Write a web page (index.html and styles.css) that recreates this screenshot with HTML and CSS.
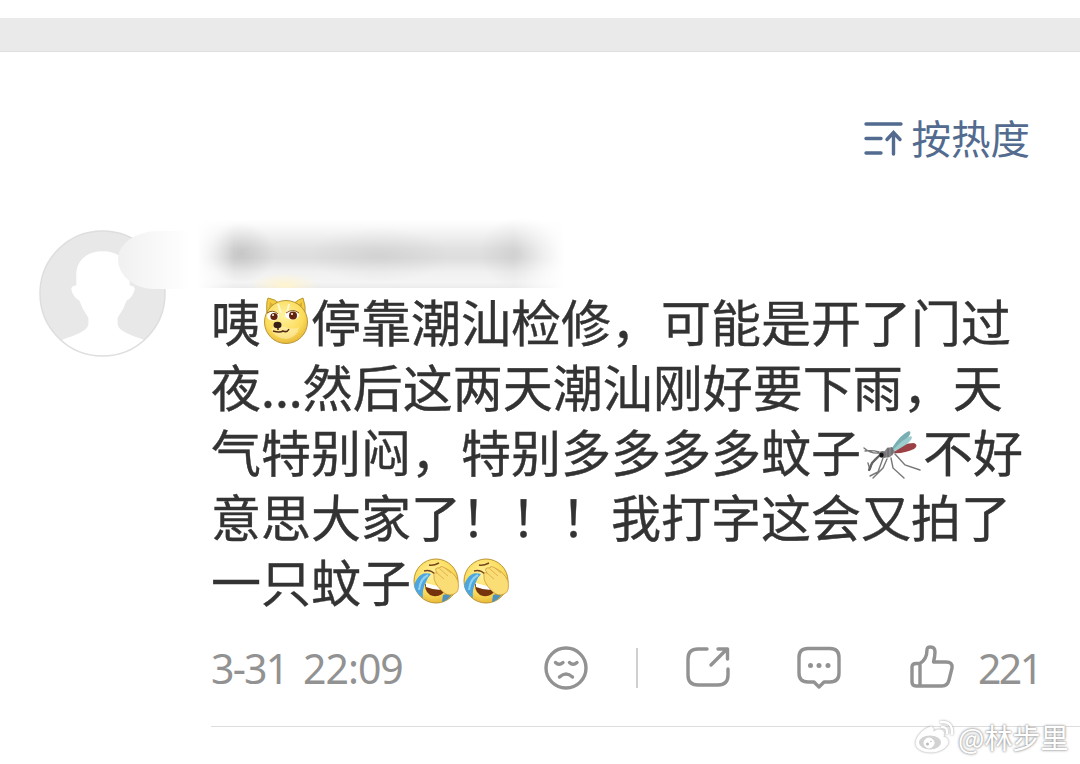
FILE: index.html
```
<!DOCTYPE html>
<html lang="zh-CN">
<head>
  <meta charset="UTF-8">
  <title>评论</title>
  <link rel="stylesheet" href="styles.css">
</head>
<body>

  <div class="top-bar"></div>

  <div class="sort">
    <svg class="sort-icon" viewBox="0 0 40 36" fill="none" stroke="#526b8f" stroke-width="3.4" stroke-linecap="round">
      <path d="M2 3H37M2 17.500H17M2 32H17M29.500 33V12M23 18.500L29.500 11.500L36 18.500"/>
    </svg>
    <span>按热度</span>
  </div>

  <div class="comment">
    <div class="avatar">
      <svg viewBox="0 0 126 126">
        <defs><clipPath id="face"><circle cx="63" cy="63" r="62"/></clipPath></defs>
        <circle cx="63" cy="63" r="62" fill="#e8e8e8"/>
        <path clip-path="url(#face)" fill="#fff" d="M63 21C46 21 37 32 37 44V55Q32 55 32 59Q34 67 40 70Q43 79 49 87V94C47 101 36 104 23 109V126H104V109C91 104 80 101 78 94V87Q84 79 87 70Q93 67 95 59Q95 55 90 55V44C90 32 80 21 63 21Z"/>
        <circle cx="63" cy="63" r="62" fill="none" stroke="#dedede" stroke-width="1.500"/>
      </svg>
      <div class="smudge"></div>
    </div>

    <div class="content">
      <div class="name"><div class="name-blur"></div></div>

      <div class="text">
        <p>咦<svg class="emoji doge" viewBox="0 0 50 50">
          <defs>
            <radialGradient id="yellow" cx=".45" cy=".35" r=".65"><stop offset="0" stop-color="#fff2a0"/><stop offset=".7" stop-color="#fbdb59"/><stop offset="1" stop-color="#e9b93b"/></radialGradient>
          </defs>
          <path d="M6 20Q5 7 7 3Q14 4 19 9M32 9Q38 4 42 3Q45 10 44 21" fill="#f4cc3d" stroke="#b99a35"/>
          <path d="M8 14L9 7L14 11M36 11L41 7L41 14" fill="#d9ad37"/>
          <circle cx="25" cy="27" r="21.500" fill="url(#yellow)" stroke="#b89738"/>
          <path d="M10 34Q15 28 24 32Q33 35 38 32Q37 42 25 44Q13 43 10 34Z" fill="#fff3c3" opacity=".5"/>
          <path d="M17 9L20 18M28 9L26 18" stroke="#fff8ce" stroke-width="2" fill="none"/>
          <ellipse cx="12" cy="21" rx="6" ry="4.500" fill="#fff"/><ellipse cx="31" cy="20" rx="7" ry="4.500" fill="#fff"/>
          <circle cx="13" cy="21.500" r="3.600" fill="#63230d"/><circle cx="32" cy="20.500" r="4" fill="#63230d"/>
          <circle cx="12" cy="20" r="1" fill="#fff"/><circle cx="31" cy="19" r="1" fill="#fff"/>
          <path d="M6 18Q12 14 17 19M25 18Q32 13 38 18" fill="none" stroke="#8b5722"/>
          <ellipse cx="16.500" cy="30" rx="4" ry="3.300" fill="#352018"/>
          <path d="M17 33V35M12 36Q19 38 22 36Q26 38 28 34" fill="none" stroke="#562c18" stroke-width="1.600"/>
        </svg>停靠潮汕检修，可能是开了门过</p>
        <p>夜...然后这两天潮汕刚好要下雨，天</p>
        <p>气特别闷，特别多多多多蚊子<svg class="mosquito" viewBox="0 0 62 50" fill="none" stroke-linecap="round">
          <path d="M21 25Q12 27 9 40L7 33M22 28L17 42L9 46M26 29L22 38L12 48M30 28L32 38L43 48M34 24L44 35L59 40M18 23Q10 24 3 18M18 22Q11 20 4 21" stroke="#777779" stroke-width="1.400"/>
          <path d="M8 40L11 33L19 25" stroke="#626264" stroke-width="2.200"/>
          <path d="M30 21Q42 13 53 13Q58 15 53 19Q43 24 31 23Z" fill="#9b4145"/>
          <path d="M31 18Q40 4 48 1Q52 2 45 10L31 21Z" fill="#79aeb2"/>
          <path d="M32 20Q43 8 50 6Q53 8 46 14L33 22Z" fill="#9bcbcd"/>
          <path d="M22 23L26 18L31 17L34 22L29 27L23 28Z" fill="#858487"/>
          <path d="M27 18V27M31 18V25" stroke="#606064"/>
          <circle cx="21.500" cy="24.500" r="3.600" fill="#747477"/><circle cx="20.500" cy="25" r="2.200" fill="#111"/>
        </svg>不好</p>
        <p>意思大家了！！！我打字这会又拍了</p>
        <p>一只蚊子<svg class="emoji" viewBox="0 0 50 50">
          <g id="facepalm">
            <circle cx="25" cy="25" r="22" fill="url(#yellow)" stroke="#bc942f"/>
            <path d="M14 28Q24 33 34 34Q31 41 22 40Q14 38 14 28Z" fill="#75330e"/>
            <path d="M15 27Q24 29 34 33Q25 35 15 31Z" fill="#fff"/>
            <path d="M20 18Q11 15 6 23Q2 29 4 33Q7 39 12 42Q11 33 15 26Q17 21 20 18Z" fill="#4da6df"/>
            <path d="M17 19Q9 23 8 34" stroke="#91d2f0" stroke-width="2" fill="none"/>
            <path d="M32 39L42 36Q38 44 31 46Z" fill="#4d91bd"/>
            <path d="M13 15Q19 13 24 18M18 9Q22 10 28 7" stroke="#74451b" stroke-width="1.500" fill="none"/>
            <path d="M23 20Q22 16 26 17Q22 11 29 12Q29 9 34 12Q43 16 47 25Q49 36 43 38Q37 41 31 35Q22 26 23 20Z" fill="#fbdd75" stroke="#cf9a34" stroke-width=".8"/>
            <path d="M26 17L33 23M29 13L37 20M34 12L40 17" stroke="#daa846" stroke-width=".8" fill="none"/>
          </g>
        </svg><svg class="emoji" viewBox="0 0 50 50"><use href="#facepalm"/></svg></p>
      </div>

      <div class="meta">
        <span class="date"><span class="day">3-31</span> 22:09</span>
        <svg class="icon sad" viewBox="0 0 44 44">
          <circle cx="22" cy="22" r="20"/>
          <path d="M11.500 16.500Q15 20 19 16.500M25.500 16.500Q29 20 33 16.500M15.500 31Q22 25 28.500 31"/>
        </svg>
        <span class="split"></span>
        <svg class="icon share" viewBox="0 0 44 44">
          <path d="M21 3H12Q2 3 2 13V29Q2 39 12 39H32Q42 39 42 29V23M25 19L41 3M32 3H41.500V13"/>
        </svg>
        <svg class="icon reply" viewBox="0 0 44 44">
          <path d="M11 2.500H33Q42 2.500 42 11.500V27Q42 36 33 36H27L22 41L17 36H11Q2 36 2 27V11.500Q2 2.500 11 2.500Z"/>
          <g fill="#929292" stroke="none"><circle cx="13.500" cy="19.500" r="2.500"/><circle cx="22" cy="19.500" r="2.500"/><circle cx="31" cy="19.500" r="2.500"/></g>
        </svg>
        <svg class="icon like" viewBox="0 0 44 44">
          <path d="M10 17.500Q17 13 17 4Q17 1 20.500 1Q25 1 25 6Q25 10 23.500 16H36Q43 16 42 22L39 34Q37.500 40 32 40H6Q2 40 2 36V21Q2 17.500 6 17.500H10ZM10 17.500V40"/>
        </svg>
        <span class="count">221</span>
      </div>
    </div>
  </div>

  <div class="watermark">
    <svg viewBox="0 0 40 34" fill="none" stroke="#fff" stroke-linecap="round">
      <path d="M17 7C10 8 2 17 2 23C2 29 9 32 17 32C27 32 34 26 34 22C34 18 30 17 29 17Q31 11 27 10Q23 9 19 12Q20 7 17 7Z" fill="#fff"/>
      <ellipse cx="16" cy="22.500" rx="11" ry="7" fill="#d2d2d2" stroke="none"/>
      <circle cx="15" cy="23" r="5" fill="#fff"/><circle cx="13.500" cy="24" r="1.500" fill="#bbb" stroke="none"/><circle cx="17" cy="21.500" r=".8" fill="#bbb" stroke="none"/>
      <path d="M27 2Q39 1 38 14M28 7Q34 7 33 13" stroke-width="2.500"/>
    </svg>
    <span>@林步里</span>
  </div>

</body>
</html>
```
FILE: styles.css
```
* { box-sizing: border-box; }

body {
  margin: 0;
  height: 764px;
  padding-top: 18px;
  position: relative;
  overflow: hidden;
  background: #fff;
  color: #333;
  font-family: "Noto Sans CJK SC", sans-serif;
}

svg {
  display: block;
  overflow: visible;
}

.top-bar {
  height: 34px;
  background: #eaeaea;
  border-bottom: 1px solid #dedede;
}

.sort {
  display: flex;
  justify-content: flex-end;
  align-items: center;
  height: 60px;
  margin-top: 57px;
  padding-right: 50px;
  gap: 8px;
  font-size: 39.5px;
  line-height: 56px;
  color: #526b8f;
}

.sort span {
  height: 60px;
}

.sort-icon {
  width: 40px;
  height: 36px;
}

.comment {
  display: flex;
  margin-top: 48px;
  padding-left: 39px;
}

.avatar {
  position: relative;
  flex: none;
  width: 172px;
  padding-top: 13px;
}

.avatar > svg {
  width: 127px;
  height: 127px;
}

/* 头像右边的涂抹 */
.smudge {
  position: absolute;
  left: 79px;
  top: 14px;
  width: 90px;
  height: 58px;
  border-radius: 40px 0 0 36px / 28px 0 0 30px;
  background: linear-gradient(90deg, #f0f0f0, #f8f8f8 40%, #fff 80%);
}

.content {
  flex: 1;
}

.name {
  height: 71px;
  margin-left: -14px;
}

/* 打码的昵称 */
.name-blur {
  width: 368px;
  height: 71px;
  background:
    radial-gradient(ellipse 34px 12px at 88px 68px, #fff4cf, transparent),
    radial-gradient(ellipse 34px 30px at 44px 36px, rgba(100, 100, 100, .2), transparent),
    radial-gradient(ellipse 70px 28px at 182px 38px, rgba(110, 110, 110, .11), transparent),
    radial-gradient(ellipse 40px 36px at 322px 36px, rgba(110, 110, 110, .14), transparent),
    linear-gradient(#fff 4%, #f3f3f3 22%, #e1e1e1 45%, #dedede 58%, #f1f1f1 78%, #f4f4f4 92%, #ebebeb);
  -webkit-mask-image: linear-gradient(90deg, transparent, #000 10%, #000 86%, transparent);
  mask-image: linear-gradient(90deg, transparent, #000 10%, #000 86%, transparent);
}

.text {
  font-size: 50px;
  line-height: 65px;
  -webkit-text-stroke: .4px #333;
}

.text p {
  display: flex;
  align-items: center;
  height: 65px;
  margin: 0;
  white-space: nowrap;
}

.emoji {
  flex: none;
  width: 50px;
  height: 50px;
}

.doge {
  margin-bottom: 2px;
}

.mosquito {
  flex: none;
  width: 62px;
  height: 50px;
  margin-top: 8px;
}

.meta {
  display: flex;
  align-items: center;
  height: 114px;
  padding-bottom: 4px;
  border-bottom: 1px solid #ddd;
  color: #929292;
  font-family: "Noto Sans", sans-serif;
  font-size: 41px;
  letter-spacing: -1px;
}

.date {
  flex: none;
  width: 333px;
  word-spacing: 6px;
}

.day {
  letter-spacing: -1.8px;
}

.icon {
  flex: none;
  width: 44px;
  height: 44px;
  fill: none;
  stroke: #929292;
  stroke-width: 3.4;
  stroke-linecap: round;
  stroke-linejoin: round;
}

.split {
  width: 2px;
  height: 40px;
  margin: 0 48px;
  background: #d0d0d0;
}

.reply {
  margin-left: 67px;
}

.like {
  margin-left: 69px;
}

.count {
  margin-left: 24px;
  letter-spacing: -2.6px;
}

.watermark {
  position: absolute;
  left: 914px;
  top: 717px;
  display: flex;
  align-items: center;
  gap: 4px;
  height: 40px;
  color: #fff;
  font-size: 28px;
  line-height: 40px;
  text-shadow: 0 0 3px #888, 0 0 2px #aaa;
}

.watermark svg {
  width: 40px;
  height: 34px;
  filter: drop-shadow(0 0 1px #999);
}
```
